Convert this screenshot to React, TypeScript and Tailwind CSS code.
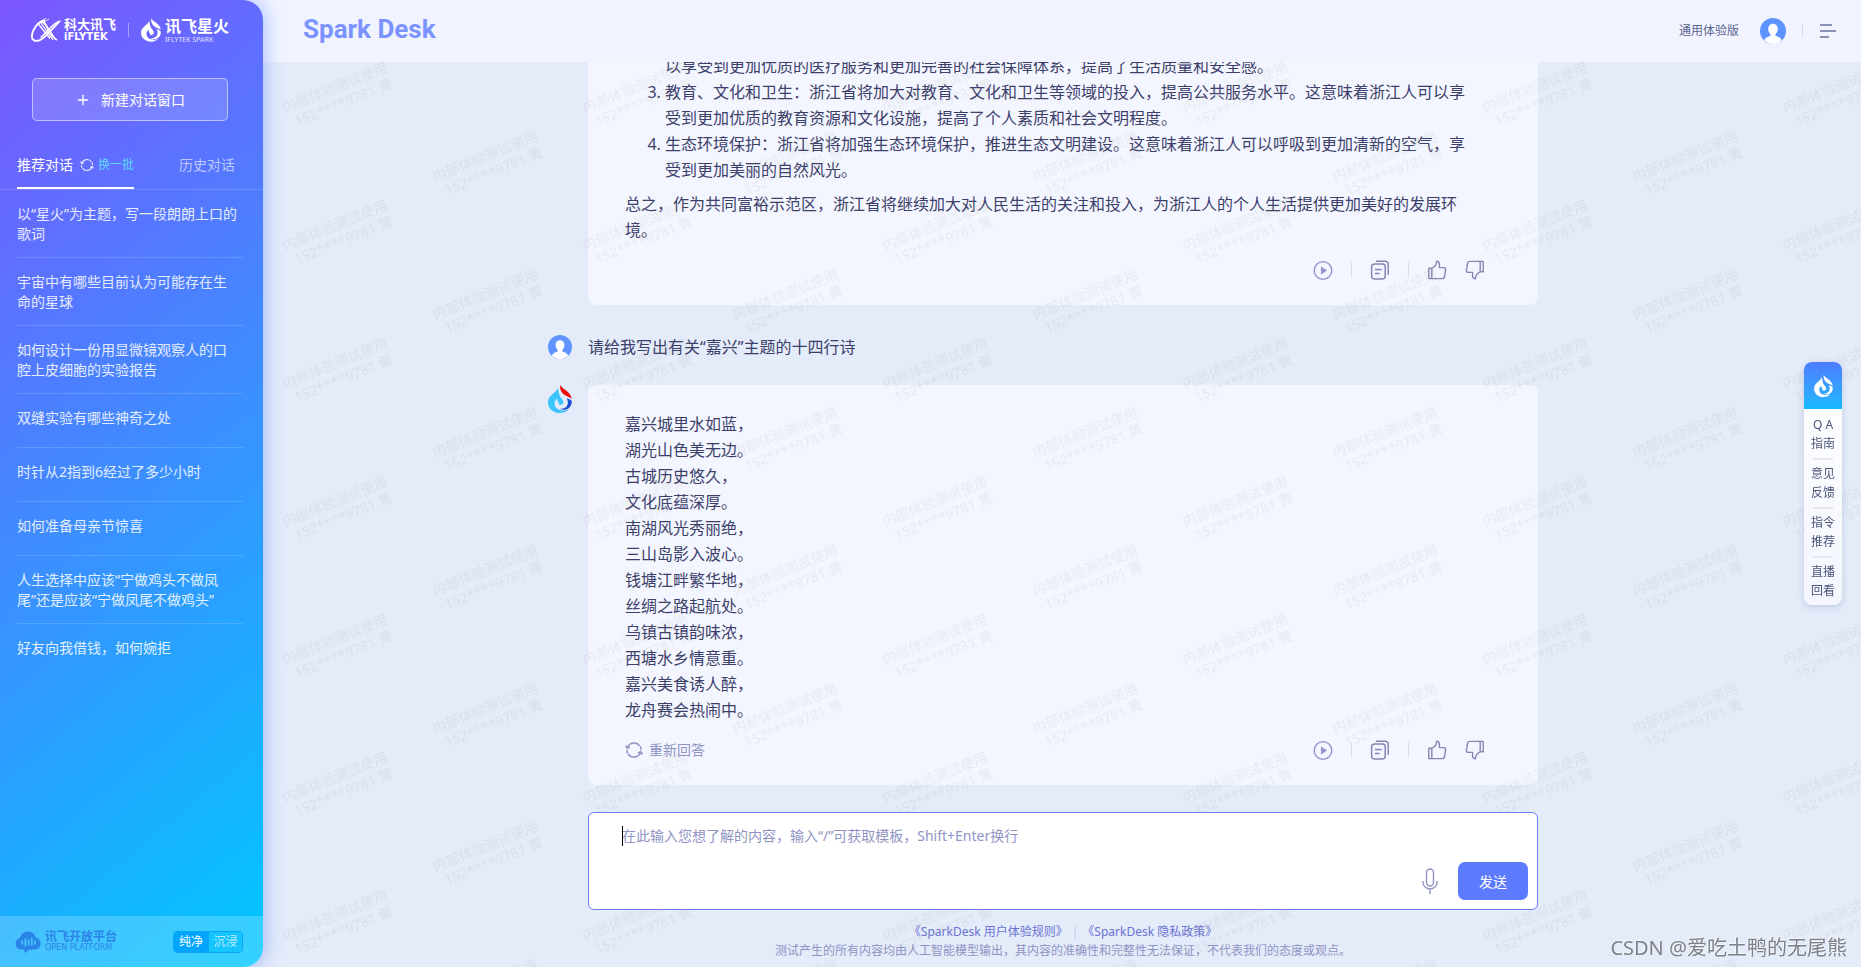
import { Plus } from "lucide-react";

const topics = [
  "以“星火”为主题，写一段朗朗上口的歌词",
  "宇宙中有哪些目前认为可能存在生命的星球",
  "如何设计一份用显微镜观察人的口腔上皮细胞的实验报告",
  "双缝实验有哪些神奇之处",
  "时针从2指到6经过了多少小时",
  "如何准备母亲节惊喜",
  "人生选择中应该“宁做鸡头不做凤尾”还是应该“宁做凤尾不做鸡头”",
  "好友向我借钱，如何婉拒",
];

const poem = [
  "嘉兴城里水如蓝，",
  "湖光山色美无边。",
  "古城历史悠久，",
  "文化底蕴深厚。",
  "南湖风光秀丽绝，",
  "三山岛影入波心。",
  "钱塘江畔繁华地，",
  "丝绸之路起航处。",
  "乌镇古镇韵味浓，",
  "西塘水乡情意重。",
  "嘉兴美食诱人醉，",
  "龙舟赛会热闹中。",
];

const shortcuts = [
  ["Q A", "指南"],
  ["意见", "反馈"],
  ["指令", "推荐"],
  ["直播", "回看"],
];

function Flame({
  className,
  body = "#fff",
  tip = "#fff",
  swirl = "#fff",
}: {
  className: string;
  body?: string;
  tip?: string;
  swirl?: string;
}) {
  return (
    <svg className={className} viewBox="0 0 24 28" aria-hidden="true">
      <path
        fill={body}
        d="M9.6 2.6C9.8 7.4 0 9.6 0 17.4 0 23.4 5.2 28 12 28c3.6 0 6.6-1.2 8.8-3.4-2.2 1-4.6 1.2-7 .8-4.8-.8-7.4-3.6-7.2-7 .1-2.2 1.2-3.6 2.8-4.8-.2 2.4.2 3.6 1.4 4.2-.4 1 .2 2.2 1.6 2.2 1.8 0 3.2-1.2 3-3.2-.2-2.4-2.6-3.6-3.8-6.4C10.6 8 10.6 5 9.6 2.6Z"
      />
      <path
        fill={tip}
        d="M12.2 0c-.4 3.6.4 6.2 2.6 8.6 2.2 2.4 5.200 2.800 9 5C22.800 9.400 21 7.800 18.200 5.400 15.800 3.600 13.400 2.400 12.200 0Z"
      />
      <path
        fill={swirl}
        d="M18.600 13.200c2 .4 4.200 1.200 5.200 2.800.2 4-1.600 6.800-4.800 8.200-2.400 1-5.400.8-7.400-.4 4.400.4 7.600-1.800 8.200-5 .4-2-.2-4-1.200-5.600Z"
      />
    </svg>
  );
}

function Avatar({ className }: { className: string }) {
  return (
    <svg className={className} viewBox="0 0 24 24" aria-hidden="true">
      <circle cx="12" cy="12" r="12" fill="#5f93ff" />
      <path
        fill="#fff"
        d="M12 5.200c2.600 0 4.400 2 4.400 4.800 0 2.200-.8 3.800-2 4.800v1.600c1.800.8 4.600 1.400 5.800 4.200C18 22.800 15.200 24 12 24s-6-1.200-8.200-3.400c1.200-2.800 4-3.400 5.800-4.200v-1.600c-1.200-1-2-2.600-2-4.800 0-2.800 1.800-4.800 4.400-4.800Z"
      />
    </svg>
  );
}

function Refresh({ className }: { className: string }) {
  return (
    <svg
      className={className}
      viewBox="0 0 18 18"
      fill="none"
      stroke="currentColor"
      strokeWidth="1.5"
      aria-hidden="true"
    >
      <path d="M2.400 6.800A7 7 0 0 1 14.800 5M15.600 11.200A7 7 0 0 1 3.200 13" />
      <path d="M15.400 5.400A7 7 0 0 1 16 9.200M2.600 12.600A7 7 0 0 1 2 8.800" />
      <path d="M.6 4.600 2.300 7.200 5 6M17.400 13.400 15.700 10.800 13 12" />
    </svg>
  );
}

function Thumb({ className }: { className: string }) {
  return (
    <svg
      className={className}
      viewBox="0 0 20 20"
      fill="none"
      stroke="currentColor"
      strokeWidth="1.4"
      strokeLinejoin="round"
      aria-hidden="true"
    >
      <path d="M4.800 8.200H1.800v10.400h3M4.800 8.200v10.400h10.600c1 0 1.800-.6 2-1.600l1.200-7.200c.2-1.200-.6-2.200-1.800-2.200h-4.400V4c0-1.800-1-2.800-2.800-2.800C9.400 4.600 7.600 7.200 4.800 8.200Z" />
    </svg>
  );
}

function Actions() {
  return (
    <div className="flex items-center gap-[18px] text-[#8387b2]">
      <button type="button" aria-label="播放" className="text-[#8f90cc]">
        <svg className="h-5 w-5" viewBox="0 0 20 20" fill="none" aria-hidden="true">
          <circle cx="10" cy="10.500" r="8.800" stroke="currentColor" strokeWidth="1.300" />
          <path d="M8 6.400v8.200l6-4.100Z" fill="currentColor" />
        </svg>
      </button>
      <span className="h-4 w-px bg-[#dcdeea]" />
      <button type="button" aria-label="复制">
        <svg
          className="h-5 w-5"
          viewBox="0 0 20 20"
          fill="none"
          stroke="currentColor"
          strokeWidth="1.5"
          aria-hidden="true"
        >
          <rect x="1.600" y="4" width="13.600" height="15" rx="3" />
          <path d="M5.800 1.200h9.400a3 3 0 0 1 3 3v10.600M5 9.400h6.600M5 13.400h4.600" />
        </svg>
      </button>
      <span className="h-4 w-px bg-[#dcdeea]" />
      <button type="button" aria-label="赞">
        <Thumb className="h-5 w-5" />
      </button>
      <button type="button" aria-label="踩">
        <Thumb className="h-5 w-5 rotate-180" />
      </button>
    </div>
  );
}

function Watermark() {
  return (
    <svg
      className="pointer-events-none absolute inset-0 h-full w-full"
      aria-hidden="true"
    >
      <defs>
        <pattern id="mark" width="300" height="138" patternUnits="userSpaceOnUse">
          <g fill="#8c8c8c" fillOpacity="0.1" fontSize="14" fontWeight="500">
            <g transform="translate(22 51) rotate(-22)">
              <text>内部体验测试使用</text>
              <text x="6" y="17">
                152****9781 黄
              </text>
            </g>
            <g transform="translate(172 120) rotate(-22)">
              <text>内部体验测试使用</text>
              <text x="6" y="17">
                152****9781 黄
              </text>
            </g>
          </g>
        </pattern>
      </defs>
      <rect width="100%" height="100%" fill="url(#mark)" />
    </svg>
  );
}

function Sidebar() {
  return (
    <aside className="relative z-20 flex w-[263px] shrink-0 flex-col overflow-hidden rounded-r-[20px] bg-[linear-gradient(140deg,#7d56ff_0%,#4c7fff_37%,#00c8ff_100%)] text-white">
      <div className="flex h-[60px] items-center pl-[31px]">
        <svg
          className="h-6 w-[30px] shrink-0"
          viewBox="0 0 30 24"
          fill="none"
          stroke="#fff"
          aria-hidden="true"
        >
          <path
            d="M14 2.500C7 3 1 12 .9 18.500c0 4 3.500 5 7.500 3.800 6-1.800 11-9.800 19.600-18.300"
            strokeWidth="1.800"
          />
          <path d="M9 3.500 22 22M12 2.500 25 22M6.500 5 19 20.500" strokeWidth="1.300" />
          <path d="M9.500 3.500c3 0 5 2 7 6.500s4.500 9.500 9.500 12" strokeWidth="1.800" />
          <path d="M29.500 3C21 5 17 14 9.500 19.500" strokeWidth="1.400" />
          <path d="M10 3 15.500 0M13 4 18 1" strokeWidth=".8" />
        </svg>
        <div className="ml-[3px] flex w-[54px] flex-col font-bold">
          <span className="text-[13px] leading-[14px]">科大讯飞</span>
          <span className="font-['DejaVu_Sans'] text-[10px] leading-[12px]">iFLYTEK</span>
        </div>
        <span className="ml-[10px] h-[14px] w-px bg-white/40" />
        <Flame className="ml-3 h-6 w-5 shrink-0" />
        <div className="ml-1 flex flex-col font-bold">
          <span className="text-[16px] leading-[18px]">讯飞星火</span>
          <span className="text-[7px] leading-[9px] font-normal whitespace-nowrap opacity-80">
            IFLYTEK SPARK
          </span>
        </div>
      </div>

      <button
        type="button"
        className="mx-8 mt-[18px] flex h-[43px] w-[196px] items-center justify-center gap-[10px] rounded-[5px] border border-white/50 bg-white/15 text-[14px]"
      >
        <Plus className="h-4 w-4" />
        新建对话窗口
      </button>

      <div className="mt-[25px] flex h-11 items-stretch justify-between border-b border-white/15 pr-7 pl-[17px]">
        <div className="flex items-center border-b-2 border-white pb-1">
          <button type="button" className="text-[14px]">
            推荐对话
          </button>
          <button
            type="button"
            className="ml-[7px] flex items-center gap-1 text-[12px] text-[#5fd5ff]"
          >
            <Refresh className="h-[14px] w-[14px] text-white/80" />
            换一批
          </button>
        </div>
        <button type="button" className="pb-[6px] text-[14px] text-white/60">
          历史对话
        </button>
      </div>

      <ul className="mr-5 ml-[17px] text-[14px] leading-5 text-white/85">
        {topics.map((topic) => (
          <li
            key={topic}
            className="min-h-[54px] border-b border-white/15 pt-[14px] pr-[3px] pb-[13px] last:border-b-0"
          >
            <button type="button" className="block text-left">
              {topic}
            </button>
          </li>
        ))}
      </ul>

      <div className="mt-auto flex h-[51px] items-center justify-between bg-white/20 pr-5 pl-[15px]">
        <a href="#platform" className="flex items-center gap-1 text-[#2a83e6]">
          <svg className="h-[22px] w-[26px]" viewBox="0 0 26 22" aria-hidden="true">
            <path
              fill="currentColor"
              d="M6 18.500a5.800 5.800 0 0 1-1-11.400C6.200 2.800 9.200.4 13 .4c3.800 0 6.800 2.400 7.800 6.400A5.900 5.900 0 0 1 20 18.500h-5.500L9.500 22v-3.500Z"
            />
            <path
              stroke="#45c3ff"
              strokeWidth="1.800"
              d="M7.200 9.500v4M10.400 7.500v8M13.600 8.500v6M16.800 6.500v8M20 9.500v4"
            />
          </svg>
          <span className="flex flex-col font-bold">
            <span className="text-[12px] leading-[13px]">讯飞开放平台</span>
            <span className="font-['DejaVu_Sans'] text-[8px] leading-[10px] font-normal whitespace-nowrap">
              OPEN PLATFORM
            </span>
          </span>
        </a>
        <div className="flex h-[22px] overflow-hidden rounded-[4px] border border-[#0aa5ee] text-[12px]">
          <button type="button" className="w-[34px] bg-[#00a5fb]">
            纯净
          </button>
          <button
            type="button"
            className="w-[34px] border-l border-[#0aa5ee] bg-[#14c4ff] text-white/70"
          >
            沉浸
          </button>
        </div>
      </div>
    </aside>
  );
}

function App() {
  return (
    <div className="flex h-screen overflow-hidden bg-[#e4ebf9] font-['Noto_Sans','Noto_Sans_CJK_SC',sans-serif] text-[#3d3f6b]">
      <div className="relative z-20 flex rounded-r-[20px] shadow-[0_0_20px_rgba(70,120,255,0.5)]">
        <Sidebar />
      </div>

      <div className="flex min-w-0 flex-1 flex-col">
        <header className="-ml-5 flex h-[62px] shrink-0 items-center bg-[#f1f4ff] pr-[25px] pl-[60px]">
          <h1 className="mb-1 font-['Roboto'] text-[26px] leading-8 font-bold text-[#7b93ff]">
            Spark Desk
          </h1>
          <span className="ml-auto text-[12px] text-[#5b6390]">通用体验版</span>
          <button type="button" aria-label="账户" className="ml-[21px]">
            <Avatar className="h-[26px] w-[26px]" />
          </button>
          <span className="ml-4 h-[14px] w-px bg-[#d3dbee]" />
          <button type="button" aria-label="菜单" className="ml-[17px]">
            <svg
              className="h-4 w-4"
              viewBox="0 0 16 16"
              stroke="#6b709f"
              strokeWidth="1.600"
              aria-hidden="true"
            >
              <path d="M0 2h12M0 8h16M0 14h9" />
            </svg>
          </button>
        </header>

        <main className="relative flex min-h-0 flex-1 flex-col pl-0.5">
          <div className="flex min-h-0 flex-1 flex-col justify-end overflow-hidden">
            <div className="mx-auto w-[950px] shrink-0 text-[16px] leading-[26px]">
              <section className="rounded-[8px] bg-[#f3f6fe] pt-[26px] pr-[53px] pb-[25px] pl-[37px]">
                <div className="w-[845px]">
                  <ol start={2} className="list-decimal pl-10">
                    <li className="list-none">
                      以享受到更加优质的医疗服务和更加完善的社会保障体系，提高了生活质量和安全感。
                    </li>
                    <li>
                      教育、文化和卫生：浙江省将加大对教育、文化和卫生等领域的投入，提高公共服务水平。这意味着浙江人可以享受到更加优质的教育资源和文化设施，提高了个人素质和社会文明程度。
                    </li>
                    <li>
                      生态环境保护：浙江省将加强生态环境保护，推进生态文明建设。这意味着浙江人可以呼吸到更加清新的空气，享受到更加美丽的自然风光。
                    </li>
                  </ol>
                  <p className="mt-2">
                    总之，作为共同富裕示范区，浙江省将继续加大对人民生活的关注和投入，为浙江人的个人生活提供更加美好的发展环境。
                  </p>
                </div>
                <div className="mt-[17px] flex justify-end">
                  <Actions />
                </div>
              </section>

              <div className="mt-[30px] -ml-10 flex h-6 items-center gap-4">
                <Avatar className="h-6 w-6" />
                <p>请给我写出有关“嘉兴”主题的十四行诗</p>
              </div>

              <div className="mt-[26px] -ml-10 flex items-start gap-4">
                <Flame
                  className="h-7 w-6 shrink-0"
                  body="#3cc4fb"
                  tip="#ee0a0a"
                  swirl="#1b50d8"
                />
                <section className="flex-1 rounded-[8px] bg-[#f3f6fe] pt-[26px] pr-[53px] pb-[25px] pl-[37px]">
                  {poem.map((line) => (
                    <p key={line}>{line}</p>
                  ))}
                  <div className="mt-[17px] flex h-5 items-center justify-between">
                    <button
                      type="button"
                      className="flex items-center gap-[6px] text-[14px] text-[#8f94c4]"
                    >
                      <Refresh className="h-[18px] w-[18px]" />
                      重新回答
                    </button>
                    <Actions />
                  </div>
                </section>
              </div>
            </div>
          </div>

          <div className="relative z-10 mx-auto mt-[27px] w-[950px] shrink-0">
            <form
              className="relative flex h-[98px] flex-col rounded-[6px] border border-[#6b7cff] bg-white"
              onSubmit={(e) => e.preventDefault()}
            >
              <textarea
                aria-label="输入内容"
                placeholder="在此输入您想了解的内容，输入“/”可获取模板，Shift+Enter换行"
                className="h-[49px] w-full resize-none px-[33px] pt-[13px] text-[14px] leading-5 outline-none placeholder:text-[#8f94c4]"
              />
              <span className="absolute top-[13px] left-[33px] h-5 w-px bg-black" />
              <div className="flex items-center justify-end gap-5 pr-[9px]">
                <button type="button" aria-label="语音输入" className="text-[#8f94c4]">
                  <svg
                    className="h-[26px] w-4"
                    viewBox="0 0 16 26"
                    fill="none"
                    stroke="currentColor"
                    strokeWidth="1.400"
                    aria-hidden="true"
                  >
                    <rect x="4.500" y="1" width="7" height="17" rx="3.500" />
                    <path d="M1 13v1.500a7 6.500 0 0 0 14 0V13M8 21v5" />
                  </svg>
                </button>
                <button
                  type="submit"
                  className="h-[38px] w-[70px] rounded-[7px] bg-[#5d7bff] text-[14px] text-white"
                >
                  发送
                </button>
              </div>
            </form>
          </div>

          <footer className="mt-3 shrink-0 pb-[7px] text-center text-[12px] leading-[19px] text-[#8f94c4]">
            <p className="flex justify-center gap-1 text-[#6b73d4]">
              <a href="#rules">《SparkDesk 用户体验规则》</a>
              <span className="text-[#c5cbe6]">|</span>
              <a href="#privacy">《SparkDesk 隐私政策》</a>
            </p>
            <p>
              测试产生的所有内容均由人工智能模型输出，其内容的准确性和完整性无法保证，不代表我们的态度或观点。
            </p>
          </footer>
          <Watermark />
        </main>
      </div>

      <nav className="fixed top-[362px] right-[19px] z-30 w-[38px] overflow-hidden rounded-[8px] bg-linear-to-b from-white to-[#f3f6fe] pb-[5px] text-center text-[12px] leading-[19px] text-[#4b5578] shadow-[0_2px_6px_rgba(90,110,160,0.25)]">
        <div className="mb-[6px] flex h-[47px] items-center justify-center bg-linear-to-b from-[#4b7cff] to-[#12b9ff]">
          <Flame className="h-[22px] w-[19px]" />
        </div>
        {shortcuts.map(([first, second], index) => (
          <div key={second}>
            {index > 0 && <div className="mx-auto mt-[5px] mb-1 h-0.5 w-5 bg-[#e6e8ee]" />}
            <a href={"#shortcut-" + index} className="block">
              {first}
              <br />
              {second}
            </a>
          </div>
        ))}
      </nav>

      <p className="fixed right-[14px] bottom-[5px] z-30 text-[20px] leading-7 text-[#7d8087] [text-shadow:-1px_-1px_0_#f5f7fc]">
        CSDN @爱吃土鸭的无尾熊
      </p>
    </div>
  );
}

export default App;
